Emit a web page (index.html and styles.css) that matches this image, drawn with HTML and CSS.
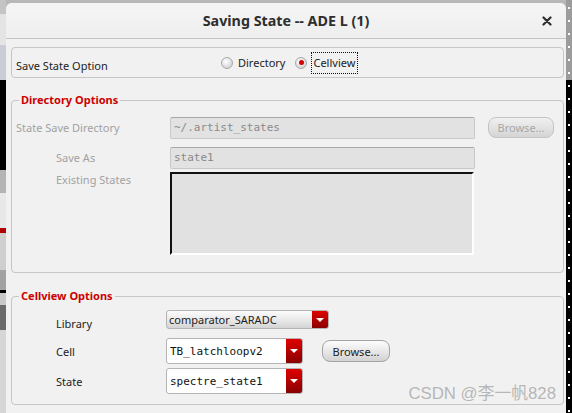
FILE: index.html
```html
<!DOCTYPE html>
<html lang="en">
<head>
    <meta charset="UTF-8">
    <title>Saving State -- ADE L (1)</title>
    <link rel="stylesheet" href="styles.css">
</head>
<body>
    <div class="desk">
        <div class="left-strip"></div>

        <div class="dialog">
            <!-- Title Bar -->
            <div class="titlebar">
                <span></span>
                <h1>Saving State -- ADE L (1)</h1>
                <span class="close">
                    <svg width="10" height="10" viewBox="0 0 10 10">
                        <path d="M1.5 1.5 L8.5 8.5 M8.5 1.5 L1.5 8.5" stroke="#2e2e2e" stroke-width="2.2" stroke-linecap="round"/>
                    </svg>
                </span>
            </div>

            <div class="content">
                <!-- Save State Option -->
                <div class="option-box">
                    <span class="option-label">Save State Option</span>
                    <label class="radio"><span class="radio-dot"></span>Directory</label>
                    <label class="radio checked"><span class="radio-dot"></span><span class="focus">Cellview</span></label>
                </div>

                <!-- Directory Options -->
                <div class="group">
                    <div class="group-title">Directory Options</div>
                    <div class="dir-grid">
                        <span class="dim-label">State Save Directory</span>
                        <div class="field disabled">~/.artist_states</div>
                        <button class="btn disabled">Browse...</button>

                        <span class="dim-label indent">Save As</span>
                        <div class="field disabled">state1</div>
                        <span></span>

                        <span class="dim-label indent top">Existing States</span>
                        <div class="listbox"></div>
                        <span></span>
                    </div>
                </div>

                <!-- Cellview Options -->
                <div class="group cellview">
                    <div class="group-title">Cellview Options</div>
                    <div class="cv-row lib-row">
                        <span class="cv-label">Library</span>
                        <div class="combo readonly">
                            <span class="combo-text">comparator_SARADC</span>
                            <span class="combo-arrow"></span>
                        </div>
                    </div>
                    <div class="cv-row">
                        <span class="cv-label">Cell</span>
                        <div class="combo editable">
                            <span class="combo-text mono">TB_latchloopv2</span>
                            <span class="combo-arrow"></span>
                        </div>
                        <button class="btn">Browse...</button>
                    </div>
                    <div class="cv-row">
                        <span class="cv-label">State</span>
                        <div class="combo editable">
                            <span class="combo-text mono">spectre_state1</span>
                            <span class="combo-arrow"></span>
                        </div>
                    </div>
                    <span class="watermark">CSDN @李一帆828</span>
                </div>
            </div>
        </div>

        <div class="right-strip"></div>
    </div>
</body>
</html>
```

FILE: styles.css
```css
/* Page */
body {
    margin: 0;
    font-family: "Noto Sans", "Noto Sans CJK SC", sans-serif;
    background: #000;
}

.desk {
    width: 572px;
    height: 413px;
    display: flex;
    overflow: hidden;
    background: #b8b8b8;
}

/* Window behind the dialog */
.left-strip {
    width: 6px;
    flex-shrink: 0;
    background: linear-gradient(180deg,
        #c4c4c4 0 14px, #e4e4e4 14px 45px, #c9cdd6 45px 80px,
        #000 80px 170px, #b4b4b4 170px 193px, #e8e8e8 193px 228px,
        #b00000 228px 233px, #cfcfcf 233px 270px, #a2a2a2 270px 290px,
        #000 290px 293px, #c8c8c8 293px 305px, #6a6a6a 305px 330px,
        #d6d6d6 330px);
}

.right-strip {
    width: 6px;
    flex-shrink: 0;
    background:
        radial-gradient(circle at 3px 6px, #fff 0.9px, transparent 1.1px) 0 80px / 6px 13px repeat-y,
        linear-gradient(180deg, #9c9c9c 0 80px, #000 80px);
}

/* Dialog */
.dialog {
    width: 560px;
    margin-top: 3px;
    flex-shrink: 0;
    background: #f1f1f1;
    border-radius: 6px 6px 0 0;
}

.titlebar {
    height: 35px;
    display: grid;
    grid-template-columns: 1fr auto 1fr;
    align-items: center;
    border-bottom: 1px solid #c4c4c4;
    background: linear-gradient(180deg, #f5f5f5, #eeeeee);
    border-radius: 6px 6px 0 0;
}

.titlebar h1 {
    margin: 0;
    font-size: 14.3px;
    font-weight: bold;
    color: #2e2e2e;
}

.close {
    justify-self: end;
    margin-right: 14px;
    display: flex;
}

.content {
    padding: 8px 2px 0 5px;
}

/* Save State Option */
.option-box {
    height: 31px;
    box-sizing: border-box;
    border: 1px solid #c6c6c6;
    border-radius: 4px;
    display: flex;
    align-items: center;
    padding-left: 4px;
    font-size: 11px;
    color: #222;
}

.option-label {
    width: 205px;
    margin-top: 6px;
}

.radio {
    display: flex;
    align-items: center;
    margin-right: 10px;
}

.radio-dot {
    width: 10px;
    height: 10px;
    border: 1px solid #a8a8a8;
    border-radius: 50%;
    background: radial-gradient(circle at 40% 35%, #ffffff, #d8d8d8 70%, #c4c4c4);
    margin-right: 5px;
    position: relative;
}

.radio.checked .radio-dot::after {
    content: "";
    position: absolute;
    left: 2.5px;
    top: 2.5px;
    width: 5px;
    height: 5px;
    border-radius: 50%;
    background: #d40000;
}

.focus {
    outline: 1px dotted #111;
    padding: 2px 2px 3px 1px;
}

/* Group boxes */
.group {
    margin-top: 22px;
    border: 1px solid #c6c6c6;
    border-radius: 4px;
    padding: 0 0 17px 4px;
    position: relative;
}

.group-title {
    width: fit-content;
    margin: -9px 0 0 3px;
    padding: 0 2px;
    background: #f1f1f1;
    font-size: 11px;
    font-weight: bold;
    line-height: 16px;
    color: #cc0000;
}

.dir-grid {
    margin-top: 9px;
    display: grid;
    grid-template-columns: 141px 305px 66px;
    grid-template-rows: 22px 30px 86px;
    column-gap: 13px;
    align-items: end;
}

.dim-label {
    font-size: 11px;
    line-height: 22px;
    color: #a2a2a2;
}

.indent {
    padding-left: 40px;
}

.top {
    align-self: start;
    margin-top: 3px;
    line-height: 16px;
}

.field {
    height: 22px;
    box-sizing: border-box;
    border: 1px solid #c8c8c8;
    border-top-color: #a8a8a8;
    border-radius: 2px;
    background: #e2e2e2;
    font-family: "DejaVu Sans Mono", monospace;
    font-size: 11px;
    line-height: 20px;
    padding-left: 3px;
    color: #8a8a8a;
}

.listbox {
    height: 83px;
    box-sizing: border-box;
    width: 304px;
    border: 2px solid #111;
    border-right-color: #fff;
    border-bottom-color: #fff;
    background: #e1e1e1;
}

/* Buttons */
.btn {
    height: 22px;
    padding: 0;
    border: 1px solid #a4a4a4;
    border-radius: 8px;
    background: linear-gradient(180deg, #fdfdfd, #e4e4e4 60%, #d2d2d2);
    font-family: "Noto Sans", sans-serif;
    font-size: 11px;
    color: #222;
}

.btn.disabled {
    height: 21px;
    align-self: start;
    border-color: #c4c4c4;
    background: linear-gradient(180deg, #f0f0f0, #e0e0e0 60%, #d4d4d4);
    color: #a8a8a8;
}

/* Cellview rows */
.cellview {
    margin-top: 23px;
    padding-bottom: 10px;
}

.cv-row {
    display: flex;
    align-items: center;
    height: 26px;
    margin-top: 4px;
}

.lib-row {
    height: 24px;
    margin-top: 6px;
    align-items: flex-start;
}

.cv-label {
    width: 110px;
    padding-left: 40px;
    font-size: 11px;
    color: #222;
}

.lib-row .cv-label {
    padding-top: 6px;
}

.combo {
    display: flex;
    box-sizing: border-box;
    border: 1px solid #b4b4b4;
    border-radius: 3px;
    overflow: hidden;
}

.combo.readonly {
    width: 163px;
    height: 19px;
    background: linear-gradient(180deg, #fbfbfb, #e6e6e6 60%, #d4d4d4);
}

.combo.editable {
    width: 137px;
    height: 26px;
    background: #fff;
}

.combo-text {
    flex: 1;
    padding-left: 2px;
    font-size: 11px;
    color: #222;
    align-self: center;
}

.combo-text.mono {
    font-family: "DejaVu Sans Mono", monospace;
    font-size: 11px;
    padding-left: 3px;
    color: #111;
}

.combo-arrow {
    width: 16px;
    background: linear-gradient(180deg, #e00000, #b00000 55%, #8a0000);
    position: relative;
}

.combo-arrow::after {
    content: "";
    position: absolute;
    left: 4px;
    top: 50%;
    margin-top: -2px;
    border-left: 4px solid transparent;
    border-right: 4px solid transparent;
    border-top: 4px solid #fff;
}

.cv-row .btn {
    width: 68px;
    margin-left: 19px;
}

/* Watermark */
.watermark {
    position: absolute;
    right: 7px;
    bottom: 0;
    font-family: "Liberation Sans", "Noto Sans CJK SC", sans-serif;
    font-size: 16.8px;
    color: rgba(130, 130, 130, 0.55);
}
```
